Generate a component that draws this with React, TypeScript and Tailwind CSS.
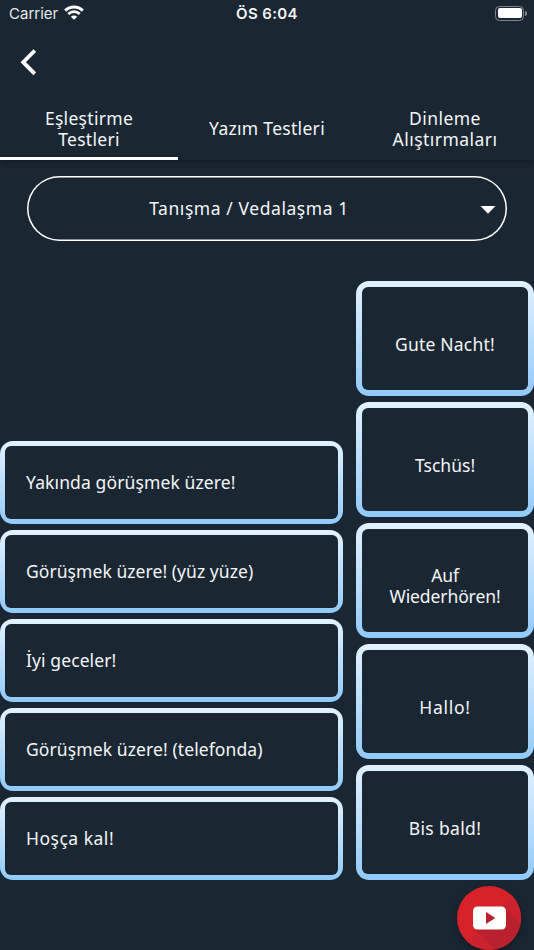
import { useState } from 'react'
import clsx from 'clsx'

const TABS = [
  { label: 'Eşleştirme\nTestleri', tracking: 'tracking-[0.3px]' },
  { label: 'Yazım Testleri', tracking: 'tracking-[0.3px]' },
  { label: 'Dinleme\nAlıştırmaları', tracking: 'tracking-[0.45px]' },
]

const MEANINGS = [
  { text: 'Yakında görüşmek üzere!', tracking: 'tracking-[0.12px]' },
  { text: 'Görüşmek üzere! (yüz yüze)', tracking: 'tracking-[0.06px]' },
  { text: 'İyi geceler!', tracking: 'tracking-[0.1px]' },
  { text: 'Görüşmek üzere! (telefonda)', tracking: 'tracking-[0.1px]' },
  { text: 'Hoşça kal!', tracking: 'tracking-[0.5px]' },
]

const PHRASES = [
  { text: 'Gute Nacht!', tracking: 'tracking-[0.2px]' },
  { text: 'Tschüs!', tracking: 'tracking-[0px]' },
  { text: 'Auf Wiederhören!', tracking: 'tracking-[-0.1px]' },
  { text: 'Hallo!', tracking: 'tracking-[0.75px]' },
  { text: 'Bis bald!', tracking: 'tracking-[0.35px]' },
]

function StatusBar() {
  return (
    <div className="grid h-7 grid-cols-3 items-center pr-[7px] pl-[9px] font-['Inter',sans-serif] text-[15px] leading-none">
      <div className="flex items-center gap-[6px]">
        <span className="-mt-px text-[#e6e9eb]">Carrier</span>
        <svg width="20" height="15" viewBox="0 0 20 15" className="-mt-[3px]" fill="none" stroke="#fff">
          <path d="M1.2 5.6C6.2 .7 13.8 .7 18.8 5.6" strokeWidth="3" />
          <path d="M4.3 9C7.6 5.9 12.4 5.9 15.7 9" strokeWidth="2.8" />
          <path d="M10 14.8 6.8 11.8C8.6 10 11.4 10 13.2 11.8Z" fill="#fff" stroke="none" />
        </svg>
      </div>
      <span className="-mt-px pr-[2px] text-center font-semibold tracking-[0.35px] text-[#f4f5f6]">ÖS 6:04</span>
      <div className="flex items-center justify-end gap-[1px]">
        <div className="-mt-[2px] h-[15px] w-[29px] rounded-[4.5px] border border-[#7d858c] p-[1.5px]">
          <div className="h-full rounded-[2px] bg-white" />
        </div>
        <div className="-mt-[2px] h-[5px] w-[2px] rounded-r-full bg-[#7d858c]" />
      </div>
    </div>
  )
}

function YoutubeButton() {
  return (
    <button
      type="button"
      aria-label="YouTube"
      className="fixed top-[886px] left-[457px] size-16 rounded-full shadow-[0_3px_8px_rgba(0,0,0,0.35)]"
    >
      <svg viewBox="0 0 64 64" className="size-full">
        <defs>
          <clipPath id="disc">
            <circle cx="32" cy="32" r="32" />
          </clipPath>
        </defs>
        <g clipPath="url(#disc)">
          <rect width="64" height="64" fill="#d62228" />
          <path d="M64 0V64H0z" fill="#cc222e" />
          <path d="M48 22 64 38V64H39L17 43Z" fill="#b9212e" />
        </g>
        <rect x="16" y="20.5" width="33" height="23" rx="4.5" fill="#fff" />
        <path d="M29 26v12l9.3-6z" fill="#b9212e" />
      </svg>
    </button>
  )
}

export default function App() {
  const [activeTab, setActiveTab] = useState(0)

  return (
    <div className="flex h-[950px] w-[534px] flex-col overflow-hidden bg-[#1a2733] font-['Noto_Sans',sans-serif] text-[17.5px] leading-[21px] text-[#f4f5f6]">
      <header className="flex h-40 flex-col shadow-[0_2px_6px_rgba(0,0,0,0.35)]">
        <StatusBar />
        <button type="button" aria-label="Geri" className="mt-5 ml-5 h-7 w-4">
          <svg width="16" height="28" viewBox="0 0 16 28" fill="none" stroke="#fff" strokeWidth="3.8">
            <path d="M14.8 2.6 3.2 14.2 14.8 25.8" />
          </svg>
        </button>
        <nav className="mt-auto grid h-16 grid-cols-3">
          {TABS.map((tab, i) => (
            <button
              key={tab.label}
              type="button"
              className={clsx(
                'border-b-[3px] pt-[4px] whitespace-pre-line',
                tab.tracking,
                i === activeTab ? 'border-white' : 'border-transparent',
              )}
              onClick={() => setActiveTab(i)}
            >
              {tab.label}
            </button>
          ))}
        </nav>
      </header>

      <button
        type="button"
        className="mx-[27px] mt-4 flex h-[65px] shrink-0 items-center rounded-full pr-[11px] pl-[10px] inset-ring-[1.5px] inset-ring-white"
      >
        <span className="flex-1 pr-[19px] text-center tracking-[0.57px]">Tanışma / Vedalaşma 1</span>
        <svg width="16" height="8" viewBox="0 0 16 8" className="mt-[2px]" fill="#fff">
          <path d="M.5 0h15L8 7.8z" />
        </svg>
      </button>

      <main className="mt-[40.3px] flex items-end justify-between">
        <div className="flex w-[343px] flex-col gap-[6.5px]">
          {MEANINGS.map((m) => (
            <button
              key={m.text}
              type="button"
              className="h-[82.5px] rounded-[13px] bg-linear-to-b from-[#e3f2fd] to-[#90caf9] p-[5px]"
            >
              <div className={clsx('flex h-full items-center rounded-[6px] bg-[#1a2733] pl-[21px]', m.tracking)}>
                {m.text}
              </div>
            </button>
          ))}
        </div>
        <div className="flex w-[178px] flex-col gap-[6.7px]">
          {PHRASES.map((p) => (
            <button
              key={p.text}
              type="button"
              className="h-[114.3px] rounded-[13px] bg-linear-to-b from-[#e3f2fd] to-[#90caf9] p-[6px]"
            >
              <div className={clsx('flex h-full items-center justify-center rounded-[6px] bg-[#1a2733] px-5 pt-[12px] text-center', p.tracking)}>
                {p.text}
              </div>
            </button>
          ))}
        </div>
      </main>

      <YoutubeButton />
    </div>
  )
}
